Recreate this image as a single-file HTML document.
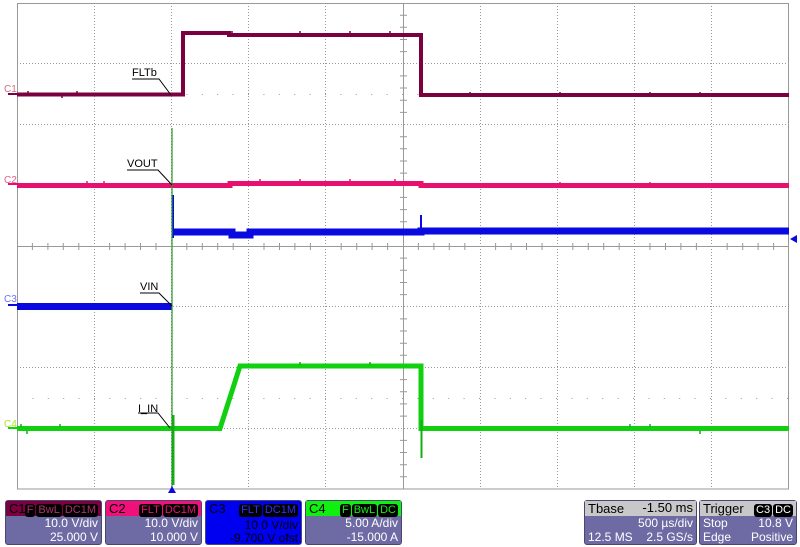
<!DOCTYPE html>
<html><head><meta charset="utf-8"><style>
html,body{margin:0;padding:0;background:#fff;width:800px;height:547px;overflow:hidden;font-family:"Liberation Sans",sans-serif}
.box{position:absolute;top:500px;height:45px;background:#6e6aa3;border-radius:3px;color:#fff;font-size:12px;box-sizing:border-box;border:1px solid #4a4670}
.hd{height:15px;line-height:15px;padding-left:3px;font-size:13px;position:relative}
.r{position:absolute;right:3px;text-align:right;line-height:14px}
.tag{display:inline-block;background:#000;border-radius:3px;font-size:11px;line-height:13px;padding:0 2px;margin-left:1px}
</style></head><body>
<svg width="800" height="547" style="position:absolute;left:0;top:0" xmlns="http://www.w3.org/2000/svg">
<g stroke="#999" stroke-width="1" stroke-dasharray="1,2">
<line x1="94.5" y1="3" x2="94.5" y2="489"/><line x1="171.5" y1="3" x2="171.5" y2="489"/>
<line x1="248.5" y1="3" x2="248.5" y2="489"/><line x1="325.5" y1="3" x2="325.5" y2="489"/>
<line x1="480.5" y1="3" x2="480.5" y2="489"/><line x1="557.5" y1="3" x2="557.5" y2="489"/>
<line x1="634.5" y1="3" x2="634.5" y2="489"/><line x1="711.5" y1="3" x2="711.5" y2="489"/>
<line x1="17" y1="63.5" x2="789" y2="63.5"/><line x1="17" y1="124.5" x2="789" y2="124.5"/>
<line x1="17" y1="185.5" x2="789" y2="185.5"/><line x1="17" y1="306.5" x2="789" y2="306.5"/>
<line x1="17" y1="367.5" x2="789" y2="367.5"/><line x1="17" y1="428.5" x2="789" y2="428.5"/>
</g>
<g stroke="#999" stroke-width="1" stroke-dasharray="1,14.4">
<line x1="17" y1="94.5" x2="789" y2="94.5"/><line x1="17" y1="398.5" x2="789" y2="398.5"/>
</g>
<g stroke="#999" fill="none">
<rect x="17.5" y="3.5" width="771" height="485.5"/>
<line x1="403.5" y1="3" x2="403.5" y2="489"/><line x1="17" y1="246.5" x2="789" y2="246.5"/>
</g>
<g stroke="#999">
<path d="M32.4 243v7M47.9 243v7M63.3 243v7M78.8 243v7M109.6 243v7M125.1 243v7M140.5 243v7M156 243v7M186.8 243v7M202.3 243v7M217.7 243v7M233.2 243v7M264 243v7M279.5 243v7M294.9 243v7M310.4 243v7M341.2 243v7M356.7 243v7M372.1 243v7M387.6 243v7M418.4 243v7M433.9 243v7M449.3 243v7M464.8 243v7M495.6 243v7M511.1 243v7M526.5 243v7M542 243v7M572.8 243v7M588.3 243v7M603.7 243v7M619.2 243v7M650 243v7M665.5 243v7M680.9 243v7M696.4 243v7M727.2 243v7M742.7 243v7M758.1 243v7M773.6 243v7"/>
<path d="M400 15.2h7M400 27.3h7M400 39.5h7M400 51.6h7M400 75.9h7M400 88h7M400 100.2h7M400 112.4h7M400 136.7h7M400 148.8h7M400 161h7M400 173.1h7M400 197.4h7M400 209.6h7M400 221.7h7M400 233.9h7M400 258.1h7M400 270.3h7M400 282.5h7M400 294.6h7M400 318.9h7M400 331h7M400 343.2h7M400 355.3h7M400 379.6h7M400 391.8h7M400 403.9h7M400 416.1h7M400 440.4h7M400 452.5h7M400 464.7h7M400 476.8h7"/>
</g>
<!-- C1 -->
<path d="M17 94.5H183V33H229V35H421V95H789" stroke="#7a0040" stroke-width="4" fill="none"/>
<path d="M28 91v3M77 91v3M62 95v3M232 31v3M300 31v3M350 31v3M390 31v3M470 92v3M560 92v3M650 92v3M700 92v3" stroke="#7a0040" stroke-width="1.5"/>
<!-- C2 -->
<path d="M17 185.5H230V183.5H421V185.5H789" stroke="#e8106e" stroke-width="5" fill="none"/>
<path d="M87 181v3M104 181v3M260 179v3M300 179v3M350 179v3M395 179v3M560 182v3M650 182v3" stroke="#e8106e" stroke-width="1.5"/>
<!-- C3 blue -->
<path d="M17 306.5H172" stroke="#0a0ae0" stroke-width="7" fill="none"/>
<path d="M173 195V238" stroke="#0a0ae0" stroke-width="2"/>
<path d="M173 232H232V235H250V232H421V231H789" stroke="#0a0ae0" stroke-width="7" fill="none"/>
<path d="M421 215V232" stroke="#0a0ae0" stroke-width="2"/>
<path d="M797 235l-7 4 7 4z" fill="#0a0ae0"/>
<!-- C4 green -->
<path d="M17 428.5H220L240 366H421V428.5H789" stroke="#10d010" stroke-width="5" fill="none"/>
<path d="M21 424v3M60 424v3M27 431v3M300 362v3M370 362v3M630 424v3M650 424v3M700 431v3" stroke="#10b010" stroke-width="1.5"/>
<path d="M173.5 415V485M421.5 420V458" stroke="#10b010" stroke-width="2"/>
<line x1="172" y1="128" x2="172" y2="489" stroke="#229922" stroke-width="1.2"/>
<path d="M172 486l-4 7h8z" fill="#0a0ae0"/>
<path d="M8 94h9" stroke="#7a0040" stroke-width="2"/>
<path d="M8 184h9" stroke="#e8106e" stroke-width="2"/>
<path d="M8 305h9" stroke="#0a0ae0" stroke-width="2"/>
<path d="M8 428h9" stroke="#10d010" stroke-width="2"/>
<g font-family="Liberation Sans,sans-serif" font-size="10">
<text x="4" y="92" fill="#d07080">C1</text>
<text x="4" y="183" fill="#e06090">C2</text>
<text x="4" y="302" fill="#7070ff">C3</text>
<text x="4" y="427" fill="#b0e020">C4</text>
</g>
<g font-family="Liberation Sans,sans-serif" font-size="11" fill="#000">
<text x="132" y="76">FLTb</text><path d="M132 79h27l12 16" stroke="#000" fill="none"/>
<text x="127" y="167">VOUT</text><path d="M127 170h31l14 15" stroke="#000" fill="none"/>
<text x="140" y="290">VIN</text><path d="M140 293h19l13 13" stroke="#000" fill="none"/>
<text x="138" y="412">I_IN</text><path d="M138 413h20l12 15" stroke="#000" fill="none"/>
</g>
</svg>

<div class="box" style="left:5px;width:97px"><div class="hd" style="background:#7a0040;color:#000">C1<span class="r" style="top:1px"><span class="tag" style="color:#b03070">F</span><span class="tag" style="color:#b03070">BwL</span><span class="tag" style="color:#b03070">DC1M</span></span></div>
<div class="r" style="top:15px">10.0 V/div</div><div class="r" style="top:29px">25.000 V</div></div>
<div class="box" style="left:105px;width:97px"><div class="hd" style="background:#f0107a;color:#000">C2<span class="r" style="top:1px"><span class="tag" style="color:#f0107a">FLT</span><span class="tag" style="color:#f0107a">DC1M</span></span></div>
<div class="r" style="top:15px">10.0 V/div</div><div class="r" style="top:29px">10.000 V</div></div>
<div class="box" style="left:205px;width:97px;background:#0000f0;color:#000"><div class="hd" style="color:#000">C3<span class="r" style="top:1px"><span class="tag" style="color:#3030ff">FLT</span><span class="tag" style="color:#3030ff">DC1M</span></span></div>
<div class="r" style="top:17px">10.0 V/div</div><div class="r" style="top:30px">-9.700 V ofst</div></div>
<div class="box" style="left:305px;width:97px"><div class="hd" style="background:#10f010;color:#000">C4<span class="r" style="top:1px"><span class="tag" style="color:#10f010">F</span><span class="tag" style="color:#10f010">BwL</span><span class="tag" style="color:#10f010">DC</span></span></div>
<div class="r" style="top:15px">5.00 A/div</div><div class="r" style="top:29px">-15.000 A</div></div>
<div class="box" style="left:584px;width:113px"><div class="hd" style="background:#c8c8c8;color:#000">Tbase<span class="r" style="top:0">-1.50 ms</span></div>
<div class="r" style="top:15px">500 µs/div</div><div style="position:absolute;left:3px;top:29px;line-height:14px">12.5 MS</div><div class="r" style="top:29px">2.5 GS/s</div></div>
<div class="box" style="left:699px;width:98px"><div class="hd" style="background:#c8c8c8;color:#000">Trigger<span class="r" style="top:1px"><span class="tag" style="color:#fff">C3</span><span class="tag" style="color:#fff">DC</span></span></div>
<div style="position:absolute;left:3px;top:15px;line-height:14px">Stop</div><div class="r" style="top:15px">10.8 V</div>
<div style="position:absolute;left:3px;top:29px;line-height:14px">Edge</div><div class="r" style="top:29px">Positive</div></div>
</body></html>
